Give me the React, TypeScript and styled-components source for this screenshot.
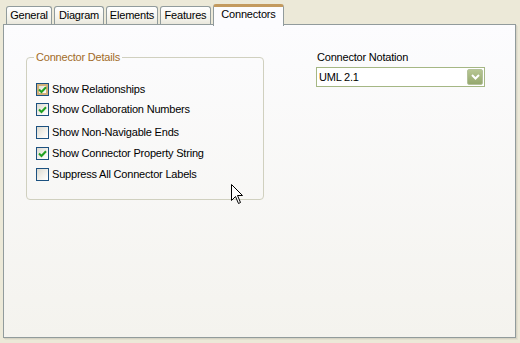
import React from "react";
import styled, { createGlobalStyle } from "styled-components";

const Global = createGlobalStyle`
  html, body {
    margin: 0;
    padding: 0;
    background: #ece9d8;
    font-family: "Liberation Sans", Arial, sans-serif;
    font-size: 11px;
    letter-spacing: -0.2px;
    color: #000;
  }
`;

const Window = styled.div`
  position: relative;
  width: 520px;
  height: 343px;
  padding: 4px 0 0 3px;
  box-sizing: border-box;
`;

const TabStrip = styled.div`
  display: flex;
  align-items: flex-end;
  height: 20px;
  padding-left: 3px;
  position: relative;
  z-index: 2;
`;

const Tab = styled.div<{ $active?: boolean; $w: number }>`
  box-sizing: border-box;
  width: ${(p) => p.$w}px;
  height: ${(p) => (p.$active ? 22 : 18)}px;
  margin-right: 2px;
  margin-bottom: ${(p) => (p.$active ? -2 : 0)}px;
  border: 1px solid #919b9c;
  border-bottom: none;
  border-top: ${(p) => (p.$active ? "3px solid #c39a5e" : "1px solid #919b9c")};
  border-radius: 3px 3px 0 0;
  background: ${(p) =>
    p.$active ? "#fcfcfe" : "linear-gradient(#ffffff, #f3f2ea 70%, #e9e7dc)"};
  display: flex;
  justify-content: center;
  padding-top: ${(p) => (p.$active ? 1 : 2)}px;
  line-height: 13px;
`;

const Panel = styled.div`
  box-sizing: border-box;
  width: 513px;
  height: 314px;
  border: 1px solid #919b9c;
  background: linear-gradient(#fcfcfe, #f4f3ee);
  box-shadow: 1px 1px 0 #d6d3c4, 2px 2px 0 #e3e0d0;
  display: flex;
  padding: 26px 0 0 22px;
`;

const Group = styled.fieldset`
  box-sizing: border-box;
  width: 238px;
  height: 149px;
  margin: 0;
  padding: 0 0 0 9px;
  border: 1px solid #d0d0bf;
  border-radius: 4px;
`;

const Legend = styled.legend`
  margin-left: -2px;
  padding: 0 2px;
  color: #a26b28;
  line-height: 13px;
`;

const Row = styled.label<{ $top: number }>`
  display: flex;
  align-items: center;
  gap: 3px;
  height: 13px;
  margin-top: ${(p) => p.$top}px;
  line-height: 13px;
`;

const Box = styled.span<{ $hot?: boolean }>`
  box-sizing: border-box;
  width: 13px;
  height: 13px;
  flex: none;
  border: 1px solid #1c5180;
  background: linear-gradient(135deg, #dcdad0, #f4f3ee 60%, #ffffff);
  box-shadow: ${(p) => (p.$hot ? "inset 0 0 0 2px #d3b17a" : "none")};
  display: flex;
  align-items: center;
  justify-content: center;
`;

const Side = styled.div`
  margin-left: 52px;
`;

const Caption = styled.div`
  line-height: 13px;
  padding-left: 1px;
`;

const Select = styled.div`
  box-sizing: border-box;
  margin-top: 3px;
  width: 169px;
  height: 20px;
  border: 1px solid #a5b784;
  background: #fff;
  display: flex;
  align-items: center;
  justify-content: space-between;
  padding: 0 1px 0 2px;
`;

const SelectBtn = styled.span`
  box-sizing: border-box;
  width: 16px;
  height: 16px;
  border: 1px solid #b4c19b;
  border-radius: 2px;
  background: linear-gradient(#b7c693, #95a86e);
  display: flex;
  align-items: center;
  justify-content: center;
`;

const Cursor = styled.svg`
  position: absolute;
  left: 231px;
  top: 184px;
`;

const Check = () => (
  <svg width="9" height="8" viewBox="0 0 9 8">
    <path d="M1 3.5 L3.5 6 L8 1.2" stroke="#21a121" strokeWidth="2" fill="none" />
  </svg>
);

const items = [
  { text: "Show Relationships", on: true, top: 19, hot: true },
  { text: "Show Collaboration Numbers", on: true, top: 7 },
  { text: "Show Non-Navigable Ends", on: false, top: 10 },
  { text: "Show Connector Property String", on: true, top: 8 },
  { text: "Suppress All Connector Labels", on: false, top: 8 },
];

const tabs = [
  { t: "General", w: 46 },
  { t: "Diagram", w: 50 },
  { t: "Elements", w: 52 },
  { t: "Features", w: 51 },
  { t: "Connectors", w: 71, on: true },
];

export default function App() {
  return (
    <Window>
      <Global />
      <TabStrip>
        {tabs.map((t) => (
          <Tab key={t.t} $w={t.w} $active={t.on}>
            {t.t}
          </Tab>
        ))}
      </TabStrip>
      <Panel>
        <Group>
          <Legend>Connector Details</Legend>
          {items.map((it) => (
            <Row key={it.text} $top={it.top}>
              <Box $hot={it.hot}>{it.on && <Check />}</Box>
              {it.text}
            </Row>
          ))}
        </Group>
        <Side>
          <Caption>Connector Notation</Caption>
          <Select>
            <span>UML 2.1</span>
            <SelectBtn>
              <svg width="9" height="6" viewBox="0 0 9 6">
                <path d="M1 1 L4.5 4.5 L8 1" stroke="#fff" strokeWidth="2" fill="none" />
              </svg>
            </SelectBtn>
          </Select>
        </Side>
      </Panel>
      <Cursor width="13" height="21" viewBox="0 0 13 21">
        <path
          d="M0.5 0.5 L0.5 16.5 L4.5 12.5 L7.5 19.5 L9.5 18.5 L6.5 11.5 L11.5 11.5 Z"
          fill="#fff"
          stroke="#000"
          strokeWidth="1"
        />
      </Cursor>
    </Window>
  );
}
